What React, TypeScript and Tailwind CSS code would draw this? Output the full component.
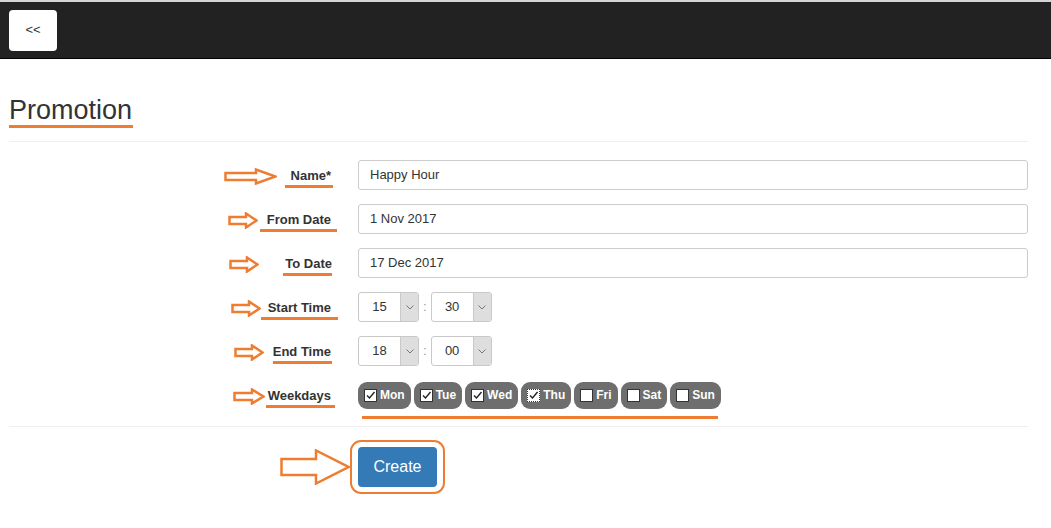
import React from "react";

const ORANGE = "#ee7d31";

function Arrow({ w, h, className = "" }: { w: number; h: number; className?: string }) {
  const hx = Math.round(w * 0.6);
  const pts = [
    [1.5, h * 0.3],
    [hx, h * 0.3],
    [hx, 1.5],
    [w - 1.5, h / 2],
    [hx, h - 1.5],
    [hx, h * 0.7],
    [1.5, h * 0.7],
  ]
    .map((p) => p.join(","))
    .join(" ");
  return (
    <svg width={w} height={h} viewBox={`0 0 ${w} ${h}`} className={className}>
      <polygon points={pts} fill="white" stroke={ORANGE} strokeWidth="2.5" strokeLinejoin="miter" />
    </svg>
  );
}

function TimeSelect({ value }: { value: string }) {
  return (
    <div className="flex h-[30px] w-[61px] overflow-hidden rounded-[3px] border border-[#c9c9c9] bg-white">
      <div className="flex flex-1 items-center justify-center text-[13px] text-[#333]">{value}</div>
      <div className="flex w-[18px] items-center justify-center border-l border-[#c9c9c9] bg-[#dedede]">
        <svg width="8" height="5" viewBox="0 0 8 5">
          <path d="M0.5 0.5 L4 4 L7.5 0.5" fill="none" stroke="#777" strokeWidth="1" />
        </svg>
      </div>
    </div>
  );
}

function Day({ label, checked, focus }: { label: string; checked: boolean; focus?: boolean }) {
  return (
    <div className="flex h-[27px] items-center gap-[3px] rounded-[9px] bg-[#6e6e6e] pl-[6px] pr-[6px]">
      <div
        className={`relative h-[13px] w-[13px] bg-white ${
          focus ? "border border-dotted border-[#333]" : "border border-[#333]"
        }`}
      >
        {checked && (
          <svg width="11" height="11" viewBox="0 0 11 11" className="absolute left-0 top-0">
            <path d="M2 5.5 L4.5 8 L9.5 2" fill="none" stroke="#222" strokeWidth="1.4" />
          </svg>
        )}
      </div>
      <span className="text-[12px] font-bold text-white">{label}</span>
    </div>
  );
}

type Row = {
  label: string;
  arrowW: number;
  arrowGap: number;
  ul: string;
  content: React.ReactNode;
};

function TextInput({ value }: { value: string }) {
  return (
    <div className="flex h-[30px] items-center rounded-[3px] border border-[#ccc] bg-white px-[11px] text-[13px] text-[#333]">
      {value}
    </div>
  );
}

export default function App() {
  const rows: Row[] = [
    {
      label: "Name*",
      arrowW: 53,
      arrowGap: 8,
      ul: "pl-[6px] pr-[2px] mr-[-1px]",
      content: <TextInput value="Happy Hour" />,
    },
    {
      label: "From Date",
      arrowW: 30,
      arrowGap: 2,
      ul: "pl-[7px] pr-[6px] mr-[-5px]",
      content: <TextInput value="1 Nov 2017" />,
    },
    {
      label: "To Date",
      arrowW: 30,
      arrowGap: 24,
      ul: "pl-[2px] pr-[0px]",
      content: <TextInput value="17 Dec 2017" />,
    },
    {
      label: "Start Time",
      arrowW: 30,
      arrowGap: 0,
      ul: "pl-[7px] pr-[7px] mr-[-6px]",
      content: (
        <div className="flex items-center gap-[4px]">
          <TimeSelect value="15" />
          <span className="text-[13px] text-[#999]">:</span>
          <TimeSelect value="30" />
        </div>
      ),
    },
    {
      label: "End Time",
      arrowW: 30,
      arrowGap: 9,
      ul: "pl-[0px] pr-[1px]",
      content: (
        <div className="flex items-center gap-[4px]">
          <TimeSelect value="18" />
          <span className="text-[13px] text-[#999]">:</span>
          <TimeSelect value="00" />
        </div>
      ),
    },
    {
      label: "Weekdays",
      arrowW: 32,
      arrowGap: 1,
      ul: "pl-[2px] pr-[4px] mr-[-3px]",
      content: (
        <div className="relative flex items-center gap-[3px]">
          <Day label="Mon" checked />
          <Day label="Tue" checked />
          <Day label="Wed" checked />
          <Day label="Thu" checked focus />
          <Day label="Fri" checked={false} />
          <Day label="Sat" checked={false} />
          <Day label="Sun" checked={false} />
          <div className="absolute left-[4px] top-[34px] h-[3px] w-[356px] bg-[#ee7d31]" />
        </div>
      ),
    },
  ];

  return (
    <div className="min-h-[528px] bg-white font-['Liberation_Sans',Arial,sans-serif] text-[#333]">
      <div className="border-t-2 border-[#d4d4d4] bg-[#222] border-b border-b-black">
        <div className="flex h-[56px] items-center pl-[9px]">
          <button className="flex h-[41px] w-[48px] items-center justify-center rounded-[4px] bg-white text-[13px] text-[#333]">
            &lt;&lt;
          </button>
        </div>
      </div>

      <div className="pl-[9px] pr-[23px]">
        <div className="pt-[36px]">
          <h3 className="inline-block border-b-[3px] border-[#ee7d31] pb-0 pr-[1px] text-[27px] leading-[30px] text-[#333]">
            Promotion
          </h3>
        </div>
        <div className="mt-[13px] h-px bg-[#eee]" />

        <div className="mt-[18px] flex flex-col gap-[14px]">
          {rows.map((r) => (
            <div key={r.label} className="flex h-[30px] items-center">
              <div className="flex w-[323px] items-center justify-end">
                <Arrow w={r.arrowW} h={17} className="mt-[2px]" />
                <span
                  className={`mt-[5px] border-b-[3px] border-[#ee7d31] pb-[2px] text-[13px] font-bold leading-[15px] ${r.ul}`}
                  style={{ marginLeft: r.arrowGap }}
                >
                  {r.label}
                </span>
              </div>
              <div className="ml-[26px] flex-1">{r.content}</div>
            </div>
          ))}
        </div>

        <div className="mt-[16px] h-px bg-[#eee]" />

        <div className="mt-[13px] flex items-center">
          <div className="flex w-[341px] justify-end">
            <svg width="70" height="36" viewBox="0 0 70 36">
              <polygon
                points="1.5,10 36,10 36,1.5 68.5,18 36,34.5 36,26 1.5,26"
                fill="white"
                stroke={ORANGE}
                strokeWidth="2.5"
              />
            </svg>
          </div>
          <div className="rounded-[11px] border-2 border-[#ee7d31] px-[6px] py-[5px]">
            <button className="h-[40px] w-[79px] rounded-[4px] bg-[#337ab7] text-[16px] text-white">Create</button>
          </div>
        </div>
      </div>
    </div>
  );
}
